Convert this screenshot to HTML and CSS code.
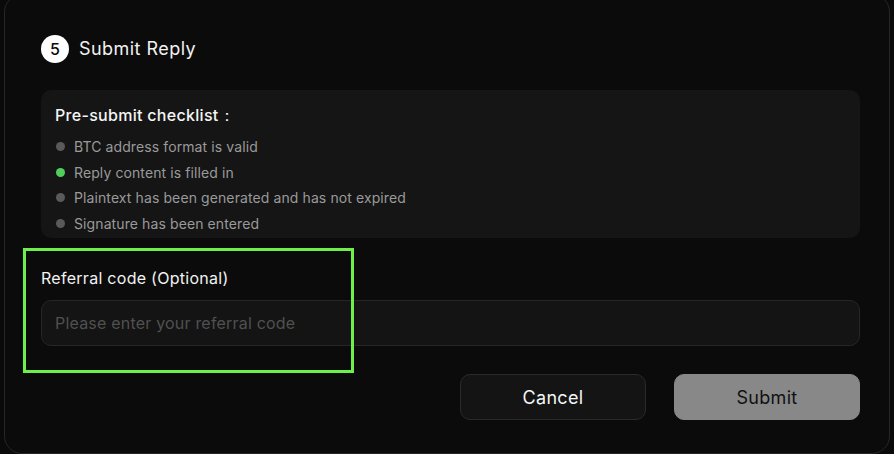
FILE: index.html
```html
<!DOCTYPE html>
<html>
<head>
<meta charset="utf-8">
<link rel="stylesheet" href="styles.css">
</head>
<body>
<div class="card">
  <div class="step-head">
    <span class="step-num">5</span>
    <span class="step-title">Submit Reply</span>
  </div>
  <div class="checklist">
    <div class="checklist-title">Pre-submit checklist：</div>
    <ul class="check-items">
      <li class="check-item"><span class="dot"></span>BTC address format is valid</li>
      <li class="check-item"><span class="dot dot-ok"></span>Reply content is filled in</li>
      <li class="check-item"><span class="dot"></span>Plaintext has been generated and has not expired</li>
      <li class="check-item"><span class="dot"></span>Signature has been entered</li>
    </ul>
  </div>
  <div class="field">
    <label class="field-label" for="ref">Referral code (Optional)</label>
    <input class="field-input" id="ref" type="text" placeholder="Please enter your referral code">
    <div class="highlight"></div>
  </div>
  <div class="actions">
    <button class="btn btn-cancel">Cancel</button>
    <button class="btn btn-submit">Submit</button>
  </div>
</div>
</body>
</html>
```
FILE: styles.css
```css
* { box-sizing: border-box; }
html, body {
  margin: 0;
  padding: 0;
  background: #0a0a0a;
  font-family: "Inter", "Liberation Sans", sans-serif;
  overflow: hidden;
}
.card {
  margin: -6px 0 0 4px;
  width: 886px;
  height: 460px;
  background: #0b0b0b;
  border: 1px solid #262626;
  border-radius: 18px;
  padding: 40px 29px 0 36px;
}
.step-head {
  display: flex;
  align-items: center;
  gap: 10px;
  height: 28px;
}
.step-num {
  width: 28px;
  height: 28px;
  border-radius: 50%;
  background: #ffffff;
  color: #0b0b0b;
  display: flex;
  align-items: center;
  justify-content: center;
  font-size: 16px;
  font-weight: 500;
}
.step-title {
  color: #f2f2f2;
  font-size: 18px;
  font-weight: 400;
  letter-spacing: 0.45px;
  margin-top: -1px;
}
.checklist {
  margin-top: 27px;
  background: #151515;
  border-radius: 10px;
  padding: 15px 14px 0 14px;
  height: 148px;
}
.checklist-title {
  color: #f5f5f5;
  font-size: 16px;
  font-weight: 500;
  line-height: 20px;
  letter-spacing: 0.3px;
}
.check-items {
  list-style: none;
  margin: 13px 0 0 0;
  padding: 0;
  display: flex;
  flex-direction: column;
  gap: 8.6px;
}
.check-item {
  display: flex;
  align-items: center;
  gap: 9px;
  color: #9a9a9a;
  font-size: 14px;
  line-height: 17px;
  letter-spacing: 0.1px;
}
.dot {
  width: 9px;
  height: 9px;
  border-radius: 50%;
  background: #5a5a5a;
  margin-left: 1px;
}
.dot-ok { background: #4fcf5a; }
.field {
  position: relative;
  margin-top: 30px;
}
.field-label {
  display: block;
  color: #f2f2f2;
  font-size: 16px;
  line-height: 20px;
  letter-spacing: 0.28px;
}
.field-input {
  display: block;
  margin-top: 12px;
  width: 100%;
  height: 46px;
  background: #141414;
  border: 1px solid #262626;
  border-radius: 10px;
  padding: 0 13px;
  color: #f2f2f2;
  font-family: inherit;
  font-size: 16px;
  letter-spacing: 0.2px;
  outline: none;
}
.field-input::placeholder { color: #505050; }
.highlight {
  position: absolute;
  left: -18px;
  top: -20px;
  width: 331px;
  height: 125px;
  border: 3.5px solid #6ef04a;
  pointer-events: none;
}
.actions {
  display: flex;
  justify-content: flex-end;
  gap: 28px;
  margin-top: 28px;
}
.btn {
  width: 186px;
  height: 46px;
  border-radius: 10px;
  font-family: inherit;
  font-size: 18px;
  letter-spacing: 0.3px;
  cursor: pointer;
}
.btn-cancel {
  background: #141414;
  border: 1px solid #2a2a2a;
  color: #f5f5f5;
}
.btn-submit {
  background: #888888;
  border: 1px solid #888888;
  color: #111111;
}
```
